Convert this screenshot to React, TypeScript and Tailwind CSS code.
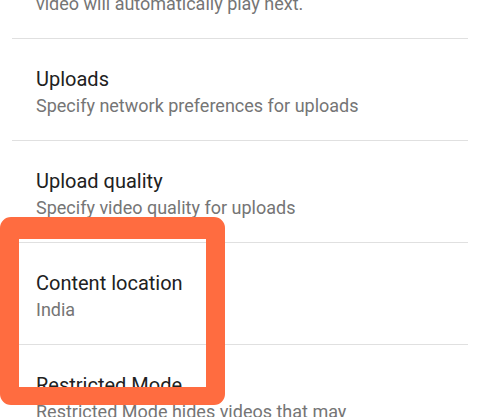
import React from 'react';

type Item = { title: string; lines: string[] };

const items: Item[] = [
  { title: 'Autoplay', lines: ['When you finish a video, another', 'video will automatically play next.'] },
  { title: 'Uploads', lines: ['Specify network preferences for uploads'] },
  { title: 'Upload quality', lines: ['Specify video quality for uploads'] },
  { title: 'Content location', lines: ['India'] },
  { title: 'Restricted Mode', lines: ['Restricted Mode hides videos that may', 'contain inappropriate content'] },
];

const SettingRow: React.FC<{ item: Item; last?: boolean }> = ({ item, last }) => (
  <div>
    <div className="px-9 pt-[26px] pb-[21px]">
      <div className="text-[20px] leading-[28px] text-[#212121]">{item.title}</div>
      {item.lines.map((l) => (
        <div key={l} className="text-[18px] leading-[26px] text-[#757575]">
          {l}
        </div>
      ))}
    </div>
    {!last && <div className="mx-3 h-px bg-[#e0e0e0]" />}
  </div>
);

const App: React.FC = () => {
  return (
    <div
      className="relative h-[417px] w-[480px] overflow-hidden bg-white"
      style={{ fontFamily: 'Roboto, "Noto Sans", sans-serif' }}
    >
      {/* settings list, scrolled mid-way */}
      <div className="-mt-[89px]">
        {items.map((it, i) => (
          <SettingRow key={it.title} item={it} last={i === items.length - 1} />
        ))}
      </div>

      {/* highlight frame drawn over the screenshot */}
      <div className="pointer-events-none absolute left-0 top-[217px] h-[188px] w-[225px] rounded-[11px] border-x-[19px] border-t-[22px] border-b-[18px] border-[#ff6c40]" />
    </div>
  );
};

export default App;
